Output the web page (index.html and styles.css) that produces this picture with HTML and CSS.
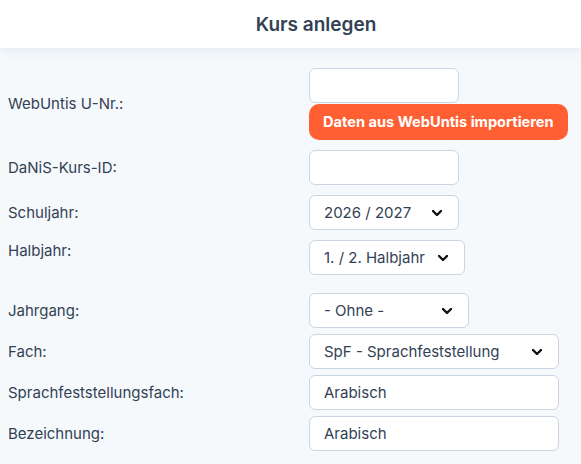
FILE: index.html
```html
<!DOCTYPE html>
<html lang="de">
	<head>
		<meta charset="utf-8" />
		<title>Kurs anlegen</title>
		<meta name="viewport" content="width=device-width, initial-scale=1.0">
		<link rel="stylesheet" href="styles.css">
	</head>
	<body>
		<header class="topbar">
			<h1>Kurs anlegen</h1>
		</header>
		<form class="form">
			<div class="row">
				<label class="label" for="untis">WebUntis U-Nr.:</label>
				<div class="field stack">
					<input class="input w-150" id="untis" type="text" />
					<button class="btn" type="button">Daten aus WebUntis importieren</button>
				</div>
			</div>
			<div class="row row--wide">
				<label class="label" for="danis">DaNiS-Kurs-ID:</label>
				<div class="field">
					<input class="input w-150" id="danis" type="text" />
				</div>
			</div>
			<div class="row row--wide">
				<label class="label">Schuljahr:</label>
				<div class="field">
					<div class="select w-150">2026 / 2027
						<svg class="chev" viewBox="0 0 10 6"><polyline points="1,1 5,5 9,1" /></svg>
					</div>
				</div>
			</div>
			<div class="row row--wide row--top">
				<label class="label">Halbjahr:</label>
				<div class="field">
					<div class="select w-156">1. / 2. Halbjahr
						<svg class="chev" viewBox="0 0 10 6"><polyline points="1,1 5,5 9,1" /></svg>
					</div>
				</div>
			</div>
			<div class="row row--gap">
				<label class="label">Jahrgang:</label>
				<div class="field">
					<div class="select w-160">- Ohne -
						<svg class="chev" viewBox="0 0 10 6"><polyline points="1,1 5,5 9,1" /></svg>
					</div>
				</div>
			</div>
			<div class="row">
				<label class="label">Fach:</label>
				<div class="field">
					<div class="select w-250">SpF - Sprachfeststellung
						<svg class="chev" viewBox="0 0 10 6"><polyline points="1,1 5,5 9,1" /></svg>
					</div>
				</div>
			</div>
			<div class="row">
				<label class="label" for="sprach">Sprachfeststellungsfach:</label>
				<div class="field">
					<input class="input w-250" id="sprach" type="text" value="Arabisch" />
				</div>
			</div>
			<div class="row">
				<label class="label" for="bez">Bezeichnung:</label>
				<div class="field">
					<input class="input w-250" id="bez" type="text" value="Arabisch" />
				</div>
			</div>
		</form>
	</body>
</html>
```

FILE: styles.css
```css
body, html {
	margin:0;
	padding:0;
	font-family:Inter, "Noto Sans", sans-serif;
	color:#334155;
	background:#f5f9fc;
}
.topbar {
	height:48px;
	background:#fff;
	display:flex;
	align-items:center;
	justify-content:center;
	padding-left:51px;
	box-shadow:0 2px 10px rgba(100,116,139,0.12);
}
.topbar h1 {
	margin:0;
	font-size:19px;
	font-weight:600;
	color:#334155;
}
.form {
	display:flex;
	flex-direction:column;
	gap:6px;
	padding:20px 8px;
}
.row {
	display:flex;
	align-items:center;
}
.row--wide {
	margin-top:4px;
}
.row--gap {
	margin-top:12px;
}
.row--top {
	align-items:flex-start;
}
.row--top .label {
	padding-top:2px;
}
.label {
	width:301px;
	flex:none;
	font-size:15px;
	line-height:18px;
}
.field {
	display:flex;
}
.stack {
	flex-direction:column;
	align-items:flex-start;
	gap:1px;
}
.input, .select {
	box-sizing:border-box;
	height:35px;
	border:1px solid #cbd5e1;
	border-radius:6px;
	background:#fff;
	font-family:inherit;
	font-size:15px;
	color:#334155;
	padding:0 14px;
	outline:none;
}
.select {
	display:flex;
	align-items:center;
	justify-content:space-between;
	padding-right:16px;
}
.chev {
	width:10px;
	height:6px;
	fill:none;
	stroke:#111;
	stroke-width:2.4;
	stroke-linecap:round;
	stroke-linejoin:round;
}
.w-150 { width:150px; }
.w-156 { width:156px; }
.w-160 { width:160px; }
.w-250 { width:250px; }
.btn {
	box-sizing:border-box;
	width:259px;
	height:36px;
	border:0;
	border-radius:10px;
	background:#ff5f33;
	color:#fff;
	font-family:inherit;
	font-size:14.6px;
	font-weight:700;
	padding:0 0 0 14px;
	text-align:left;
	white-space:nowrap;
	cursor:pointer;
}
```
